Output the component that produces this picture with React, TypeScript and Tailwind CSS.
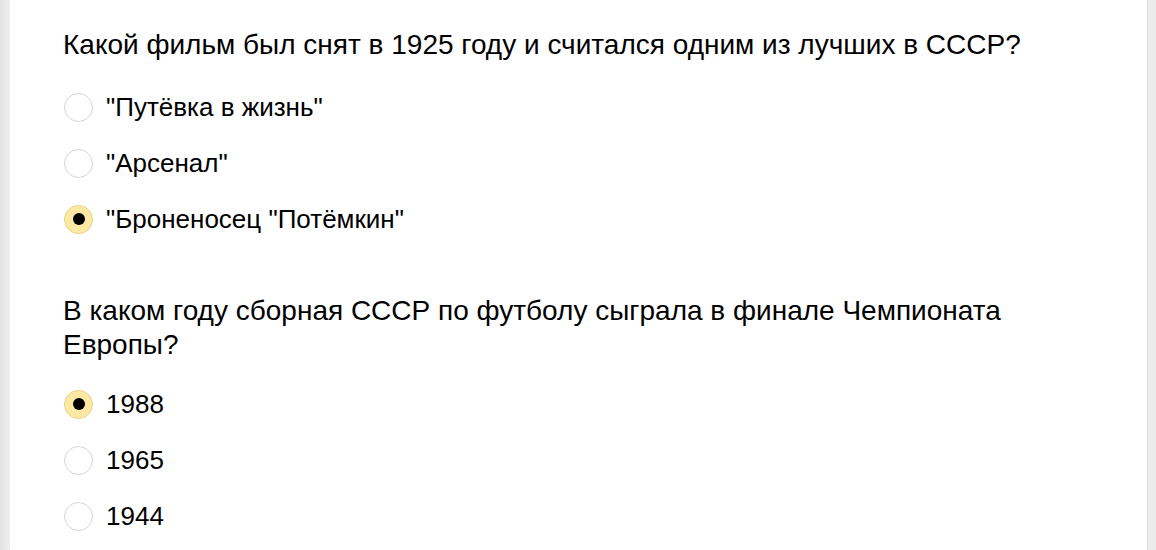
const questions = [
  {
    title: 'Какой фильм был снят в 1925 году и считался одним из лучших в СССР?',
    options: ['"Путёвка в жизнь"', '"Арсенал"', '"Броненосец "Потёмкин"'],
    selected: 2,
  },
  {
    title: 'В каком году сборная СССР по футболу сыграла в финале Чемпионата Европы?',
    options: ['1988', '1965', '1944'],
    selected: 0,
  },
];

function Radio({ checked }: { checked: boolean }) {
  return (
    <span
      className={
        checked
          ? 'ml-px flex h-[29px] w-[29px] shrink-0 items-center justify-center rounded-full border border-[#e9d185] bg-[#fde9a4]'
          : 'ml-px flex h-[29px] w-[29px] shrink-0 items-center justify-center rounded-full border border-[#d5d5d5] bg-white'
      }
    >
      {checked && <span className="h-[12px] w-[12px] rounded-full bg-black" />}
    </span>
  );
}

export default function App() {
  return (
    <div className="flex h-[550px] w-full overflow-hidden bg-white font-['Liberation_Sans',Arial,sans-serif] text-black">
      <div className="w-[10px] shrink-0 bg-gradient-to-r from-[#e4e4e4] to-[#efefef]" />
      <main className="flex-1 pl-[53px] pr-[64px] pt-[28px]">
        {questions.map((q, qi) => (
          <section key={qi} className={qi > 0 ? 'mt-[47px]' : ''}>
            <h2 className={(qi > 0 ? 'mb-[14px] ' : 'mb-[17px] ') + 'text-[28px] font-normal leading-[34px]'}>
              {q.title}
            </h2>
            <div className="flex flex-col">
              {q.options.map((opt, oi) => (
                <label key={oi} className="flex h-[56px] items-center gap-[13px]">
                  <Radio checked={oi === q.selected} />
                  <span className="text-[26px] leading-[32px]">{opt}</span>
                </label>
              ))}
            </div>
          </section>
        ))}
      </main>
      <div className="w-[9px] shrink-0 border-l border-[#e2e2e2] bg-[#ebebeb]" />
    </div>
  );
}
